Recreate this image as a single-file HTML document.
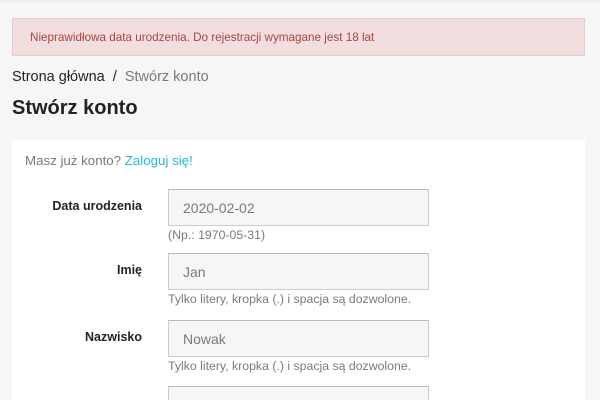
<!DOCTYPE html>
<html style="height:400px;overflow:hidden"><head><meta charset="utf-8"><style>
*{box-sizing:border-box;margin:0;padding:0}
body{width:600px;height:400px;overflow:hidden;background:#f6f6f6;font-family:"Liberation Sans",sans-serif;position:relative}
.top{position:absolute;left:0;top:0;width:600px;height:2px;background:#eee}
.alert{position:absolute;left:12px;top:18px;width:573px;height:38px;background:#f2dede;border:1px solid #ebcccc;color:#a94442;font-size:11.7px;padding:12px 17px}
.bc{position:absolute;left:12px;top:69px;font-size:14.5px;color:#232323}
.bc span{color:#7a7a7a}
h1{position:absolute;left:12px;top:97px;font-size:20px;font-weight:bold;color:#232323}
.card{position:absolute;left:12px;top:140px;width:573px;height:260px;background:#fff}
.masz{position:absolute;left:25px;top:153px;font-size:13.3px;color:#7a7a7a}
.masz a{color:#24b9d7;text-decoration:none}
.lbl{position:absolute;right:458px;font-size:12.5px;font-weight:bold;color:#232323;text-align:right}
.inp{position:absolute;left:168px;width:261px;height:37px;background:#f6f6f6;border:1px solid #ccc;border-top-color:#bbb;font-size:14px;color:#7a7a7a;padding:10px 14px}
.help{position:absolute;left:168px;font-size:12.3px;color:#7a7a7a}
</style></head><body>
<div class="top"></div>
<div class="alert">Nieprawidłowa data urodzenia. Do rejestracji wymagane jest 18 lat</div>
<div class="bc">Strona główna &nbsp;/&nbsp; <span>Stwórz konto</span></div>
<h1>Stwórz konto</h1>
<div class="card"></div>
<div class="masz">Masz już konto? <a>Zaloguj się!</a></div>
<div class="lbl" style="top:199px">Data urodzenia</div>
<div class="inp" style="top:189px">2020-02-02</div>
<div class="help" style="top:228px">(Np.: 1970-05-31)</div>
<div class="lbl" style="top:263px">Imię</div>
<div class="inp" style="top:253px">Jan</div>
<div class="help" style="top:292px">Tylko litery, kropka (.) i spacja są dozwolone.</div>
<div class="lbl" style="top:330px">Nazwisko</div>
<div class="inp" style="top:320px">Nowak</div>
<div class="help" style="top:359px">Tylko litery, kropka (.) i spacja są dozwolone.</div>
<div class="inp" style="top:386px;height:14px"></div>
</body></html>
